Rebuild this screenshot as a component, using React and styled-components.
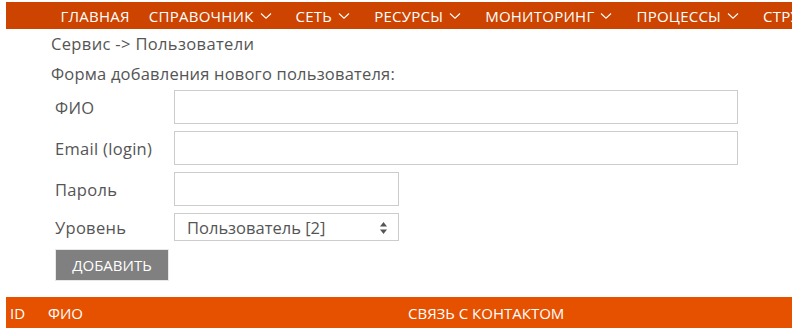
import React from "react";
import styled, { createGlobalStyle } from "styled-components";

const Global = createGlobalStyle`
  html, body { margin: 0; padding: 0; background: #fff; }
  body { font-family: "Open Sans", "Noto Sans", sans-serif; color: #555; overflow: hidden; }
  * { box-sizing: border-box; }
`;

const Page = styled.div`
  padding: 2px 0 0 6px;
  width: 792px;
`;

const Nav = styled.nav`
  display: flex;
  align-items: center;
  height: 27px;
  background: #cc4400;
  padding-left: 43.5px;
  white-space: nowrap;
  overflow: hidden;
`;

const NavItem = styled.a`
  display: flex;
  align-items: center;
  gap: 6px;
  padding: 0 ${(p) => (p.$menu ? 13 : 8)}px 0 11px;
  color: #fff;
  font-size: 15px;
  letter-spacing: 0.25px;
  text-transform: uppercase;
  text-decoration: none;
  height: 100%;
  flex-shrink: 0;
`;

const Chevron = () => (
  <svg width="12" height="8" viewBox="0 0 12 8" fill="none">
    <path d="M1 1.5 L6 6.2 L11 1.5" stroke="#fff" strokeWidth="1.1" />
  </svg>
);

const Content = styled.div`
  padding-left: 45px;
`;

const Breadcrumb = styled.div`
  font-size: 16.5px;
  height: 30px;
  line-height: 30px;
  letter-spacing: 0.35px;
`;

const FormTitle = styled.div`
  font-size: 16.5px;
  height: 31px;
  line-height: 30px;
  letter-spacing: 0.2px;
`;

const Form = styled.form`
  display: flex;
  flex-direction: column;
  gap: 7px;
  padding-left: 4px;
`;

const Row = styled.div`
  display: flex;
  align-items: center;
  height: ${(p) => p.$h || 34}px;
`;

const Label = styled.label`
  width: 119px;
  font-size: 16.5px;
  letter-spacing: 0.3px;
`;

const Input = styled.input`
  width: ${(p) => p.$w}px;
  height: 100%;
  border: 1px solid #ccc;
  outline: none;
  padding: 0 8px;
  font: inherit;
`;

const SelectBox = styled.div`
  position: relative;
  width: 225px;
  height: 28px;
  border: 1px solid #ccc;
  display: flex;
  align-items: center;
  padding-left: 12px;
  font-size: 16.5px;
  color: #555;
`;

const Arrows = styled.svg`
  position: absolute;
  right: 11px;
  top: 8px;
`;

const Button = styled.button`
  margin-top: 1px;
  width: 114px;
  height: 32px;
  background: #808080;
  border: 1px solid #e8e8e8;
  color: #fff;
  font-family: inherit;
  font-size: 15px;
  text-transform: uppercase;
  padding: 0;
`;

const Table = styled.table`
  margin-top: 16px;
  width: 786px;
  border-collapse: collapse;
`;

const Th = styled.th`
  background: #e65100;
  color: #fff;
  font-weight: normal;
  text-align: left;
  text-transform: uppercase;
  font-size: 15px;
  height: 31px;
  padding: 0 0 0 4px;
  width: ${(p) => (p.$w ? `${p.$w}px` : "auto")};
`;

const navItems = [
  ["Главная", false],
  ["Справочник", true],
  ["Сеть", true],
  ["Ресурсы", true],
  ["Мониторинг", true],
  ["Процессы", true],
  ["Структура", true],
];

export default function App() {
  return (
    <>
      <Global />
      <Page>
        <Nav>
          {navItems.map(([t, c]) => (
            <NavItem key={t} $menu={c}>
              {t}
              {c && <Chevron />}
            </NavItem>
          ))}
        </Nav>
        <Content>
          <Breadcrumb>Сервис -&gt; Пользователи</Breadcrumb>
          <FormTitle>Форма добавления нового пользователя:</FormTitle>
          <Form>
            <Row>
              <Label>ФИО</Label>
              <Input $w={564} />
            </Row>
            <Row>
              <Label>Email (login)</Label>
              <Input $w={564} />
            </Row>
            <Row>
              <Label>Пароль</Label>
              <Input $w={225} type="password" />
            </Row>
            <Row $h={28}>
              <Label>Уровень</Label>
              <SelectBox>
                Пользователь [2]
                <Arrows width="7" height="12" viewBox="0 0 7 12">
                  <path d="M3.5 0 L7 4.5 L0 4.5 Z" fill="#555" />
                  <path d="M3.5 12 L7 7.5 L0 7.5 Z" fill="#555" />
                </Arrows>
              </SelectBox>
            </Row>
            <Row $h={33}>
              <Button type="button">Добавить</Button>
            </Row>
          </Form>
        </Content>
        <Table>
          <thead>
            <tr>
              <Th $w={38}>ID</Th>
              <Th $w={360}>ФИО</Th>
              <Th>Связь с контактом</Th>
            </tr>
          </thead>
        </Table>
      </Page>
    </>
  );
}
